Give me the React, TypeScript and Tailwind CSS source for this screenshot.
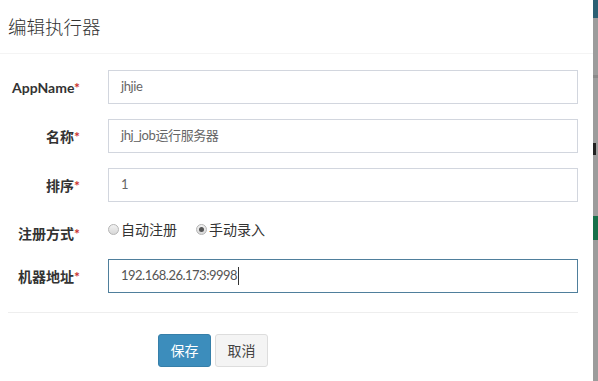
import React from 'react';

const font = { fontFamily: 'Lato, "Noto Sans CJK SC", sans-serif' };

function Label({ text, className = '' }: { text: string; className?: string }) {
  return (
    <label className={`w-[80px] shrink-0 text-right text-[14px] font-bold text-[#333] ${className}`}>
      {text}
      <span className="text-[#c9302c]">*</span>
    </label>
  );
}

function Radio({ checked, label }: { checked?: boolean; label: string }) {
  return (
    <span className="flex items-center">
      <span className="flex h-[11px] w-[11px] items-center justify-center rounded-full border border-[#b5b5b5] bg-gradient-to-b from-[#f2f2f2] to-[#d8d8d8]">
        {checked && <span className="h-[5px] w-[5px] rounded-full bg-[#555]" />}
      </span>
      <span className="ml-[2px] text-[14px] text-[#333]">{label}</span>
    </span>
  );
}

function Row({ label, value }: { label: string; value: string }) {
  return (
    <div className="flex items-center">
      <Label text={label} />
      <div className="ml-[28px] flex h-[34px] w-[470px] items-center border border-[#d2d6de] px-[12px] text-[13px] tracking-[-0.4px] text-[#666]">
        {value}
      </div>
    </div>
  );
}

export default function App() {
  return (
    <div className="flex h-[381px] w-[598px] overflow-hidden bg-white" style={font}>
      <div className="flex w-[593px] flex-col">
        <div className="flex h-[54px] items-center border-b border-[#f4f4f4] pl-[8px] pt-[3px]">
          <h4 className="text-[18.5px] font-light text-[#333]">编辑执行器</h4>
        </div>
        <div className="flex flex-col gap-[15px] pt-[16px]">
          <Row label="AppName" value="jhjie" />
          <Row label="名称" value="jhj_job运行服务器" />
          <Row label="排序" value="1" />
          <div className="flex h-[27px] items-start">
            <Label text="注册方式" className="pt-[6px]" />
            <div className="ml-[28px] flex items-center gap-[19px] pt-[2px]">
              <Radio label="自动注册" />
              <Radio checked label="手动录入" />
            </div>
          </div>
          <div className="flex items-center">
            <Label text="机器地址" />
            <div className="ml-[28px] flex h-[34px] w-[470px] items-center border border-[#4f7f9c] px-[12px] text-[13px] tracking-[-0.5px] text-[#555]">
              192.168.26.173:9998
              <span className="ml-[1px] h-[18px] w-px bg-[#333]" />
            </div>
          </div>
        </div>
        <div className="ml-[8px] mt-[19px] h-px w-[570px] bg-[#eee]" />
        <div className="flex gap-[4px] pl-[158px] pt-[21px]">
          <button className="h-[33px] w-[53px] rounded-[3px] border border-[#367fa9] bg-[#3c8dbc] text-[14px] text-white">
            保存
          </button>
          <button className="h-[33px] w-[53px] rounded-[3px] border border-[#ddd] bg-[#f4f4f4] text-[14px] text-[#444]">
            取消
          </button>
        </div>
      </div>
      <div className="relative flex w-[5px] flex-col bg-[#9c9c9c]">
        <div className="h-[18px] bg-[#2b5f73]" />
        <div className="mt-[57px] h-[3px] bg-[#8a8a8a]" />
        <div className="mt-[65px] h-[12px] w-[3px] bg-[#222]" />
        <div className="mt-[61px] h-[24px] bg-[#17704a]" />
      </div>
    </div>
  );
}
